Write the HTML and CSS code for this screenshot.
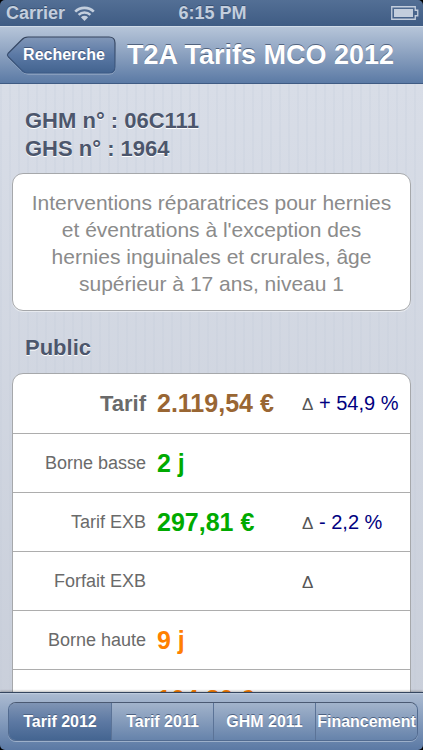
FILE: index.html
```html
<!DOCTYPE html>
<html lang="fr">
<head>
<meta charset="utf-8">
<meta name="viewport" content="width=device-width, initial-scale=1">
<title>T2A Tarifs MCO 2012</title>
<link rel="stylesheet" href="styles.css">
</head>
<body>
<div class="app">
  <div class="status">
    <div class="status-left">
      <span>Carrier</span>
      <svg class="wifi" viewBox="0 0 21 15" aria-hidden="true">
        <path d="M1.2 5.6a13.4 13.4 0 0 1 18.6 0M4.6 8.9a8.6 8.6 0 0 1 11.8 0" fill="none" stroke="currentColor" stroke-width="2.6"/>
        <path d="M10.5 15 6.900 11.300a5.200 5.200 0 0 1 7.200 0z" fill="currentColor"/>
      </svg>
    </div>
    <span class="clock">6:15 PM</span>
    <div class="status-right">
      <svg class="battery" viewBox="0 0 28 14" aria-hidden="true">
        <path d="M.75.75h23.5v3.500h2.500v5.500h-2.500v3.500H.75z" fill="none" stroke="currentColor" stroke-width="1.3"/>
        <path d="M3 3h19v8H3z" fill="currentColor"/>
      </svg>
    </div>
  </div>
  <header class="navbar">
    <button class="back" type="button">
      <svg class="back-shape" viewBox="0 0 110 39" aria-hidden="true">
        <defs>
          <linearGradient id="back-fill" x1="0" y1="0" x2="0" y2="1">
            <stop offset="0" stop-color="#8197b8"/>
            <stop offset=".5" stop-color="#5b79a5"/>
            <stop offset="1" stop-color="#42638f"/>
          </linearGradient>
          <linearGradient id="back-edge" x1="0" y1="0" x2="0" y2="1">
            <stop offset="0" stop-color="#34435c"/>
            <stop offset="1" stop-color="#3c5a86"/>
          </linearGradient>
        </defs>
        <path d="M22 2H103Q109 2 109 8V32Q109 38 103 38H22Q18 38 15.500 35L2 21.500Q.8 20 2 18.500L15.500 5Q18 2 22 2z" fill="none" stroke="#a3b4cc" stroke-width="1"/>
        <path d="M22 1H103Q109 1 109 7V31Q109 37 103 37H22Q18 37 15.500 34L2 20.500Q.8 19 2 17.500L15.500 4Q18 1 22 1z" fill="url(#back-fill)" stroke="url(#back-edge)" stroke-width="1.200"/>
      </svg>
      <span class="back-label">Recherche</span>
    </button>
    <h1 class="title">T2A Tarifs MCO 2012</h1>
  </header>
  <main class="content">
    <h2 class="heading">GHM n° : 06C111<br>GHS n° : 1964</h2>
    <p class="card description">Interventions réparatrices pour hernies et éventrations à l'exception des hernies inguinales et crurales, âge supérieur à 17 ans, niveau 1</p>
    <h2 class="heading public" id="public">Public</h2>
    <div class="card">
      <table class="rates" aria-labelledby="public">
        <tbody>
          <tr class="main-rate"><th scope="row">Tarif</th><td class="value brown">2.119,54 €</td><td class="change"><span class="delta">Δ</span>+ 54,9 %</td></tr>
          <tr><th scope="row">Borne basse</th><td class="value green">2 j</td><td></td></tr>
          <tr><th scope="row">Tarif EXB</th><td class="value green">297,81 €</td><td class="change"><span class="delta">Δ</span>- 2,2 %</td></tr>
          <tr><th scope="row">Forfait EXB</th><td></td><td class="change"><span class="delta">Δ</span></td></tr>
          <tr><th scope="row">Borne haute</th><td class="value orange">9 j</td><td></td></tr>
          <tr><th scope="row">Tarif EXH</th><td class="value orange">104,80 €</td><td></td></tr>
        </tbody>
      </table>
    </div>
  </main>
  <nav class="toolbar">
    <div class="segments">
      <button class="segment selected" type="button" aria-pressed="true">Tarif 2012</button>
      <button class="segment" type="button">Tarif 2011</button>
      <button class="segment" type="button">GHM 2011</button>
      <button class="segment" type="button">Financement</button>
    </div>
  </nav>
</div>
</body>
</html>
```
FILE: styles.css
```css
* { box-sizing: border-box; }

body {
  margin: 0;
  background: #000;
  font-family: "Liberation Sans", Arial, sans-serif;
}

button {
  margin: 0;
  padding: 0;
  border: 0;
  background: none;
  font: inherit;
  color: inherit;
}

.app {
  display: flex;
  flex-direction: column;
  height: 100vh;
  overflow: hidden;
  border-radius: 5px;
}

.status {
  display: grid;
  grid-template-columns: 1fr auto 1fr;
  align-items: center;
  height: 26px;
  padding: 0 4px 0 6px;
  background: linear-gradient(#536f95, #3f5c84);
  color: #c3cedd;
  font-size: 18px;
  font-weight: bold;
  text-shadow: 0 -1px 0 #3a5273;
}

.status-left { display: flex; align-items: center; gap: 9px; }
.status-right { display: flex; justify-content: flex-end; }
.wifi { width: 21px; height: 15px; }
.battery { width: 28px; height: 14px; }

.navbar {
  display: flex;
  align-items: center;
  gap: 11px;
  height: 58px;
  padding: 0 6px;
  border-top: 1px solid #d0dbe8;
  border-bottom: 1px solid #3f5b83;
  background: linear-gradient(#b6c5d9, #8aa0bf 50%, #5b7aa5);
  color: #fff;
}

.back {
  position: relative;
  flex: none;
  width: 110px;
  height: 39px;
  padding-left: 6px;
  font-size: 16px;
  font-weight: bold;
  text-shadow: 0 -1px 0 #40587c;
}

.back-shape { position: absolute; inset: 0; width: 100%; height: 100%; }
.back-label { position: relative; }

.title {
  margin: 0;
  font-size: 27px;
  line-height: 32px;
  white-space: nowrap;
  text-shadow: 0 -1px 0 #52647f;
}

.content {
  flex: 1;
  min-height: 0;
  overflow: hidden;
  padding: 23px 12px 0;
  background:
    linear-gradient(#c3c9d500, #c3c9d5b0),
    repeating-linear-gradient(90deg, #d3d9e4 0 2px, #d8dde7 2px 9px);
}

.heading {
  margin: 0 0 10px;
  padding-left: 13px;
  color: #4c566c;
  font-size: 22px;
  line-height: 28px;
  text-shadow: 0 1px 0 #fff;
}

.public { margin: 23px 0 11px; }

.card {
  margin: 0;
  border: 1px solid #a6a8ab;
  border-radius: 11px;
  background: #fff;
  box-shadow: 0 1px 0 #e8ebf0;
}

.description {
  padding: 15px 12px 13px;
  color: #8b8b8b;
  font-size: 21px;
  line-height: 27px;
  text-align: center;
}

.rates {
  width: 100%;
  border-collapse: separate;
  border-spacing: 0;
  table-layout: fixed;
}

.rates tr { height: 59px; }
.rates .main-rate { height: 60px; }

.rates th, .rates td {
  padding: 0;
  border-bottom: 1px solid #adadad;
  text-align: left;
  white-space: nowrap;
}

.rates th {
  width: 144px;
  padding-right: 11px;
  color: #6a6a6a;
  font-size: 18px;
  font-weight: normal;
  text-align: right;
}

.rates .main-rate th { font-size: 22px; font-weight: bold; }
.rates .value { font-size: 25px; font-weight: bold; }
.rates .change { color: #000080; font-size: 20px; }
.rates td:last-child { width: 108px; }

.delta {
  display: inline-block;
  width: 17px;
  color: #555;
  font-size: 17px;
}

.brown { color: #996633; }
.green { color: #00aa00; }
.orange { color: #ff8000; }

.toolbar {
  height: 58px;
  padding: 9px 5px 0 8px;
  border-top: 1px solid #34455f;
  background: linear-gradient(#c5d2e2, #a9b9d0 3%, #849bbc 50%, #5b79a4);
  box-shadow: 0 -1px 2px #0004;
}

.segments {
  display: grid;
  grid-template-columns: repeat(4, 1fr);
  height: 39px;
  border: 1px solid #526b90;
  border-top-color: #4a5972;
  border-radius: 8px;
  overflow: hidden;
  box-shadow: 0 1px 0 #9db0ca;
}

.segment {
  background: linear-gradient(#a2b3cb, #849bbb 50%, #6683ab);
  color: #fff;
  font-size: 16px;
  font-weight: bold;
  white-space: nowrap;
  text-shadow: 0 -1px 0 #4d6282;
}

.segment + .segment { border-left: 1px solid #5b7397; }
.segment.selected { background: linear-gradient(#7f94b4, #5d79a3 50%, #446591); }
```
